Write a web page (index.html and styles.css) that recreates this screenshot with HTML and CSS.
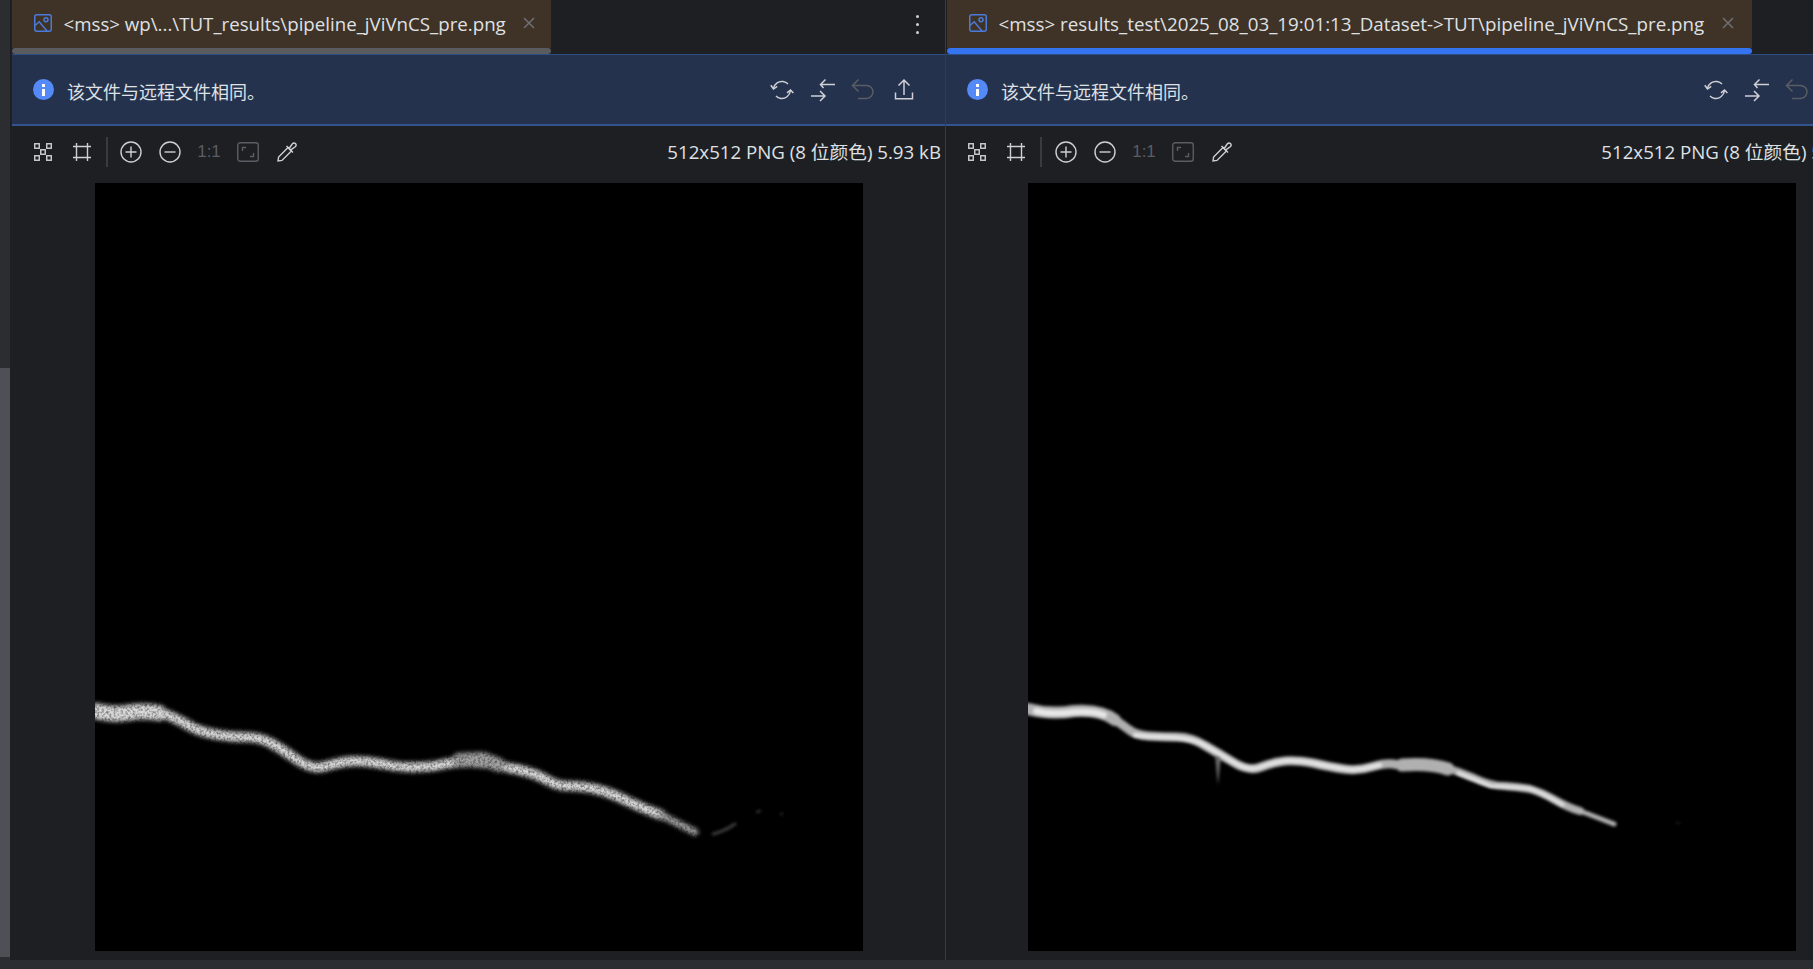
FILE: index.html
```html
<!DOCTYPE html>
<html lang="en">

<head>
    <meta charset="UTF-8">
    <meta name="viewport" content="width=device-width, initial-scale=1.0">
    <title>image diff</title>
    <link rel="stylesheet" href="styles.css">
</head>

<body>
    <!-- shared icons -->
    <svg class="defs" width="0" height="0">
        <defs>
            <filter id="soft-noise" x="-5%" y="-20%" width="110%" height="140%">
                <feGaussianBlur in="SourceGraphic" stdDeviation="1.9" result="blurred" />
                <feTurbulence type="fractalNoise" baseFrequency="0.42" numOctaves="2" seed="4" result="grain" />
                <feColorMatrix in="grain" type="matrix" values="0 0 0 0 1  0 0 0 0 1  0 0 0 0 1  1.1 0 0 0 0.35" result="mask" />
                <feComposite in="blurred" in2="mask" operator="in" result="grainy" />
                <feGaussianBlur in="grainy" stdDeviation="0.6" />
            </filter>
            <filter id="soft" x="-5%" y="-20%" width="110%" height="140%">
                <feGaussianBlur stdDeviation="1.7" />
            </filter>
            <symbol id="i-image" viewBox="0 0 18 18">
                <rect x="0.75" y="0.75" width="16.5" height="16.5" rx="2" />
                <circle cx="12" cy="5.8" r="2" />
                <path d="M1 11.5 L5.2 7.8 L13 17" />
            </symbol>
            <symbol id="i-close" viewBox="0 0 12 12">
                <path d="M1 1 L11 11 M11 1 L1 11" />
            </symbol>
            <symbol id="i-actual" viewBox="0 0 18 18">
                <rect x="0.75" y="0.75" width="4.5" height="4.5" />
                <rect x="12.75" y="0.75" width="4.5" height="4.5" />
                <rect x="6.75" y="6.75" width="4.5" height="4.5" />
                <rect x="0.75" y="12.75" width="4.5" height="4.5" />
                <rect x="12.75" y="12.75" width="4.5" height="4.5" />
            </symbol>
            <symbol id="i-crop" viewBox="0 0 18 18">
                <path d="M3.5 0 V18 M14.5 0 V18 M0 3.5 H18 M0 14.5 H18" />
            </symbol>
            <symbol id="i-plus" viewBox="0 0 22 22">
                <circle cx="11" cy="11" r="10" />
                <path d="M11 5.5 V16.5 M5.5 11 H16.5" />
            </symbol>
            <symbol id="i-minus" viewBox="0 0 22 22">
                <circle cx="11" cy="11" r="10" />
                <path d="M5.5 11 H16.5" />
            </symbol>
            <symbol id="i-fit" viewBox="0 0 22 20">
                <rect x="0.75" y="0.75" width="20.5" height="18.5" rx="2.5" />
                <path d="M5.5 9 V5.5 H9 M16.5 11 V14.5 H13" />
            </symbol>
            <symbol id="i-pipette" viewBox="0 0 20 20">
                <path d="M1 19 L1.6 15 L11 5.6 L14.4 9 L5 18.4 Z" />
                <path d="M9.5 4 L16 10.5 M12.5 6 L15.2 2 C16.2 0.8 17.6 0.8 18.6 1.6 C19.4 2.6 19.2 3.8 18.2 4.8 L14.2 7.6" />
            </symbol>
            <symbol id="i-sync" viewBox="0 0 24 24">
                <path d="M3.5 10.5 C4.5 5.5 9 3 13 3.6 C15.5 4 17 5 18 6" />
                <path d="M0.8 7.2 L3.5 11 L7.2 8.4" />
                <path d="M20.5 12.5 C19.8 18 15 21 10.8 20.4 C8.5 20 7 19 6 18" />
                <path d="M17 14.8 L20.5 12 L23.4 15" />
            </symbol>
            <symbol id="i-compare" viewBox="0 0 24 24">
                <path d="M10 6.5 H24 M14.5 1.5 L9.5 6.5 L12.5 10" />
                <path d="M0 18 H13 M9 13 L14 18 L9 23" />
            </symbol>
            <symbol id="i-revert" viewBox="0 0 24 24">
                <path d="M1.5 7.5 H15.5 C19.5 7.5 22 10.5 22 13.8 C22 17 19.5 20.5 15.5 20.5 H7" />
                <path d="M7.5 1.5 L1.5 7.5 L7.5 13.5" />
            </symbol>
            <symbol id="i-upload" viewBox="0 0 24 24">
                <path d="M12 2 V17 M6.5 7.5 L12 2 L17.5 7.5" />
                <path d="M3.5 14.5 V20.7 H20.5 V14.5" />
            </symbol>
        </defs>
    </svg>

    <div class="app">
        <div class="workspace">
            <div class="left-rail">
                <div class="rail-thumb"></div>
            </div>

            <!-- left file -->
            <div class="panel panel-left">
                <div class="tab-bar">
                    <div class="tab">
                        <div class="tab-body">
                            <svg class="tab-icon"><use href="#i-image" /></svg>
                            <span class="tab-title">&lt;mss&gt; wp\...\TUT_results\pipeline_jViVnCS_pre.png</span>
                            <svg class="tab-close"><use href="#i-close" /></svg>
                        </div>
                        <div class="tab-line"></div>
                    </div>
                    <div class="tab-more">
                        <span></span><span></span><span></span>
                    </div>
                </div>
                <div class="banner">
                    <div class="info-icon"><span class="info-dot"></span><span class="info-bar"></span></div>
                    <span class="banner-text">该文件与远程文件相同。</span>
                    <div class="banner-actions">
                        <button class="banner-btn"><svg><use href="#i-sync" /></svg></button>
                        <button class="banner-btn"><svg><use href="#i-compare" /></svg></button>
                        <button class="banner-btn dim"><svg><use href="#i-revert" /></svg></button>
                        <button class="banner-btn"><svg><use href="#i-upload" /></svg></button>
                    </div>
                </div>
                <div class="toolbar">
                    <button class="tool"><svg class="s18"><use href="#i-actual" /></svg></button>
                    <button class="tool"><svg class="s18"><use href="#i-crop" /></svg></button>
                    <div class="tool-sep"></div>
                    <button class="tool"><svg class="s22"><use href="#i-plus" /></svg></button>
                    <button class="tool"><svg class="s22"><use href="#i-minus" /></svg></button>
                    <button class="tool tool-text">1:1</button>
                    <button class="tool dim"><svg class="s22"><use href="#i-fit" /></svg></button>
                    <button class="tool"><svg class="s20"><use href="#i-pipette" /></svg></button>
                    <span class="file-info">512x512 PNG (8 位颜色) 5.93 kB</span>
                </div>
                <div class="viewer">
                    <svg class="picture" viewBox="0 0 768 768">
                        <g filter="url(#soft-noise)" class="trace-rough">
                            <path class="w10" d="M0 528 L15 529 Q31 530 47 530 Q64 530 72 532 Q80 535 91 541 Q102 548 118 551 Q135 554 149 554 Q163 554 174 559 Q185 565 201 576 Q218 588 231 583 Q245 579 258 578 Q272 578 288 581 Q305 585 321 584 Q338 584 349 581 Q360 579 374 579 Q388 579 396 581 Q404 583 420 586 Q437 589 450 596 Q464 604 475 603 Q486 603 500 606 Q514 609 530 617 Q547 625 566 632" />
                            <path class="w16" d="M0 528 Q18 532 31 530 Q48 527 64 530" />
                            <path class="w14 dimmer" d="M364 577 L388 576 L404 582" />
                            <path class="w7 dimmer" d="M566 632 L600 649" />
                        </g>
                        <g filter="url(#soft)" class="trace-faint">
                            <path class="w3" d="M618 651 Q630 648 640 641" />
                            <path class="w2" d="M662 629 L665 628 M686 631 L687 631" />
                        </g>
                    </svg>
                </div>
            </div>

            <!-- right file -->
            <div class="panel panel-right">
                <div class="tab-bar">
                    <div class="tab">
                        <div class="tab-body">
                            <svg class="tab-icon"><use href="#i-image" /></svg>
                            <span class="tab-title">&lt;mss&gt; results_test\2025_08_03_19:01:13_Dataset-&gt;TUT\pipeline_jViVnCS_pre.png</span>
                            <svg class="tab-close"><use href="#i-close" /></svg>
                        </div>
                        <div class="tab-line active"></div>
                    </div>
                </div>
                <div class="banner">
                    <div class="info-icon"><span class="info-dot"></span><span class="info-bar"></span></div>
                    <span class="banner-text">该文件与远程文件相同。</span>
                    <div class="banner-actions">
                        <button class="banner-btn"><svg><use href="#i-sync" /></svg></button>
                        <button class="banner-btn"><svg><use href="#i-compare" /></svg></button>
                        <button class="banner-btn dim"><svg><use href="#i-revert" /></svg></button>
                        <button class="banner-btn"><svg><use href="#i-upload" /></svg></button>
                    </div>
                </div>
                <div class="toolbar">
                    <button class="tool"><svg class="s18"><use href="#i-actual" /></svg></button>
                    <button class="tool"><svg class="s18"><use href="#i-crop" /></svg></button>
                    <div class="tool-sep"></div>
                    <button class="tool"><svg class="s22"><use href="#i-plus" /></svg></button>
                    <button class="tool"><svg class="s22"><use href="#i-minus" /></svg></button>
                    <button class="tool tool-text">1:1</button>
                    <button class="tool dim"><svg class="s22"><use href="#i-fit" /></svg></button>
                    <button class="tool"><svg class="s20"><use href="#i-pipette" /></svg></button>
                    <span class="file-info">512x512 PNG (8 位颜色) 5.93 kB</span>
                </div>
                <div class="viewer">
                    <svg class="picture" viewBox="0 0 768 768">
                        <g filter="url(#soft)" class="trace-outer">
                            <path class="w12" d="M0 526 Q23 532 46 528 Q73 526 87 537" />
                            <path class="w9" d="M80 532 Q92 540 100 546 Q107 552 121 553 Q135 554 149 554 Q163 554 176 562 Q190 570 205 579 Q221 589 233 584 Q246 579 257 578 Q268 577 285 580 Q302 584 316 586 Q330 588 343 584 Q357 580 365 581 Q374 583 388 582" />
                            <path class="w13" d="M374 582 Q402 580 420 586" />
                            <path class="w8" d="M412 583 Q430 588 446 595 Q463 603 477 603 Q491 604 502 606 Q513 609 527 617 Q541 625 552 628" />
                            <path class="w5" d="M552 628 Q563 632 586 641" />
                            <path class="spike" d="M187 572 L190 602 L193 572 Z" />
                            <path class="w1" d="M648 640 L652 640" />
                        </g>
                        <g filter="url(#soft)" class="trace-core">
                            <path class="w6" d="M8 528 Q23 532 46 529 Q66 528 76 532" />
                            <path class="w4" d="M107 552 Q121 554 135 554 Q163 554 176 562 Q190 570 205 579 Q221 589 233 584 Q246 579 257 578 Q268 577 285 580 Q302 584 316 586 Q330 588 343 584 L352 582" />
                            <path class="w3" d="M430 590 Q446 596 463 603 Q491 604 502 606 Q513 609 535 622" />
                        </g>
                    </svg>
                </div>
            </div>
        </div>
        <div class="footer"></div>
    </div>
</body>

</html>
```

FILE: styles.css
```css
* {
    margin: 0px;
    padding: 0px;
    box-sizing: border-box;
}

body {
    font-family: "Open Sans", "Noto Sans CJK SC", sans-serif;
    background-color: #1e1f22;
    color: #dfe1e5;
    overflow: hidden;
}

button {
    border: unset;
    background-color: unset;
    color: inherit;
    font-family: inherit;
}

.defs {
    position: absolute;
}

.app {
    height: 100vh;
    display: flex;
    flex-direction: column;
}

.workspace {
    flex: 1;
    display: flex;
    min-height: 0;
    overflow: hidden;
}

.footer {
    height: 9px;
    background-color: #2b2d30;
}

/* scrollbar strip on the far left */
.left-rail {
    flex: 0 0 12px;
    background-color: #2b2d30;
    border-right: 2px solid #1e1f22;
    position: relative;
}

.rail-thumb {
    position: absolute;
    left: 0;
    top: 368px;
    bottom: 3px;
    width: 10px;
    background-color: #4e5056;
}

.panel {
    flex: 0 0 933px;
    display: flex;
    flex-direction: column;
}

.panel-left {
    flex-basis: 934px;
    border-right: 1px solid #393b40;
}

.panel-left .tab-body {
    padding-right: 16px;
}

.panel-left .tab-title {
    font-size: 18.7px;
}

.panel-right .tab {
    margin-left: 1px;
}

.panel-right .tool-sep {
    margin-right: 5px;
}

/* tabs */
.tab-bar {
    height: 54px;
    display: flex;
    justify-content: space-between;
    background-color: #1e1f22;
}

.tab {
    display: flex;
    flex-direction: column;
}

.tab-body {
    height: 48px;
    display: flex;
    align-items: center;
    padding: 0px 18px 2px 22px;
    background-color: #3f3226;
}

.tab-icon {
    width: 18px;
    height: 18px;
    margin-right: 11.5px;
    fill: none;
    stroke: #4a7bdc;
    stroke-width: 1.5;
}

.tab-title {
    font-size: 18.75px;
    white-space: nowrap;
    color: #dfe1e5;
}

.tab-close {
    width: 12px;
    height: 12px;
    margin-left: 17.5px;
    fill: none;
    stroke: #6f7074;
    stroke-width: 1.5;
}

.tab-line {
    height: 6px;
    border-radius: 3px;
    background-color: #5a5b5f;
}

.tab-line.active {
    background-color: #3574f0;
}

.tab-more {
    width: 56px;
    padding-bottom: 6px;
    display: flex;
    flex-direction: column;
    align-items: center;
    justify-content: center;
    gap: 5px;
}

.tab-more span {
    width: 3px;
    height: 3px;
    border-radius: 100%;
    background-color: #ced0d6;
}

/* notification banner */
.banner {
    height: 72px;
    display: flex;
    align-items: center;
    padding: 0px 21px 0px 21px;
    background-color: #25324d;
    border-top: 1px solid #2e4d85;
    border-bottom: 2px solid #35538f;
}

.info-icon {
    width: 21px;
    height: 21px;
    border-radius: 100%;
    background-color: #548af7;
    display: flex;
    flex-direction: column;
    align-items: center;
    justify-content: center;
    gap: 2px;
}

.info-dot {
    width: 3px;
    height: 3px;
    background-color: #ffffff;
}

.info-bar {
    width: 3px;
    height: 7px;
    background-color: #ffffff;
}

.banner-text {
    margin-left: 13px;
    padding-top: 2px;
    font-size: 18px;
}

.banner-actions {
    margin-left: auto;
    display: flex;
}

.banner-btn {
    width: 40.5px;
    height: 28px;
    display: flex;
    align-items: center;
    justify-content: center;
}

.banner-btn svg {
    width: 24px;
    height: 24px;
    fill: none;
    stroke: #ced0d6;
    stroke-width: 1.5;
}

.banner-btn.dim svg {
    stroke: #5a5d63;
}

/* image toolbar */
.toolbar {
    height: 57px;
    display: flex;
    align-items: center;
    padding: 0px 4px 5px 11.5px;
    background-color: #1e1f22;
}

.tool {
    width: 39px;
    height: 30px;
    display: flex;
    align-items: center;
    justify-content: center;
}

.tool svg {
    fill: none;
    stroke: #ced0d6;
    stroke-width: 1.4;
}

.tool .s18 {
    width: 18px;
    height: 18px;
}

.tool .s20 {
    width: 20px;
    height: 20px;
}

.tool .s22 {
    width: 22px;
    height: 22px;
}

.tool.dim svg {
    stroke: #5a5d63;
}

.tool-text {
    font-family: "Liberation Sans", sans-serif;
    font-size: 17px;
    color: #5a5d63;
}

.tool-sep {
    width: 2px;
    height: 30px;
    margin: 0px 4px 0px 4px;
    background-color: #393b40;
}

.file-info {
    margin-left: auto;
    margin-bottom: 3px;
    font-size: 18.7px;
    white-space: nowrap;
}

/* picture area */
.viewer {
    flex: 1;
    display: flex;
    align-items: flex-start;
    padding-left: 83px;
}

.panel-right .viewer {
    padding-left: 82px;
}

.picture {
    display: block;
    width: 768px;
    height: 768px;
    flex-shrink: 0;
    background-color: #000000;
    fill: none;
    stroke-linecap: round;
    stroke-linejoin: round;
}

.trace-rough {
    stroke: #d8d8d8;
}

.dimmer {
    stroke: #a0a0a0;
}

.trace-faint {
    stroke: #3c3c3c;
}

.trace-outer {
    stroke: #b0b0b0;
}

.trace-core {
    stroke: #e8e8e8;
}

.spike {
    fill: #6a6a6a;
    stroke: none;
}

.w1 { stroke-width: 1; stroke: #333333; }
.w2 { stroke-width: 2; }
.w3 { stroke-width: 3; }
.w4 { stroke-width: 4; }
.w5 { stroke-width: 5; }
.w6 { stroke-width: 6; }
.w7 { stroke-width: 7; }
.w8 { stroke-width: 8; }
.w9 { stroke-width: 9; }
.w10 { stroke-width: 10; }
.w12 { stroke-width: 12; }
.w13 { stroke-width: 13; }
.w14 { stroke-width: 14; }
.w16 { stroke-width: 16; }
```
